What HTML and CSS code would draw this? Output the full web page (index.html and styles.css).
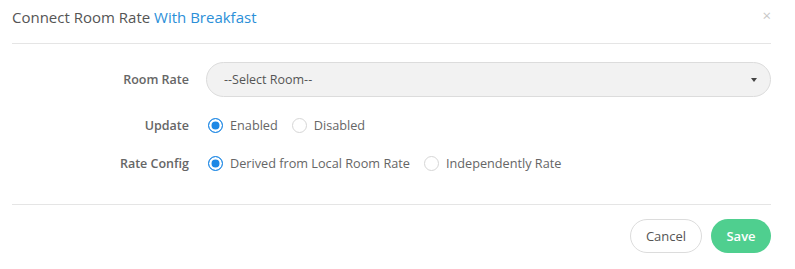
FILE: index.html
```html
<!DOCTYPE html>
<html lang="en">
<head>
    <meta charset="UTF-8">
    <title>Connect Room Rate</title>
    <link rel="stylesheet" href="styles.css">
</head>
<body>
    <div class="modal">
        <div class="modal-header">
            <h4>Connect Room Rate <span class="accent">With Breakfast</span></h4>
            <span class="close-btn">&times;</span>
        </div>

        <div class="modal-body">
            <div class="form-row">
                <label class="form-label">Room Rate</label>
                <div class="select-box">
                    <span>--Select Room--</span>
                    <span class="caret"></span>
                </div>
            </div>
            <div class="form-row">
                <label class="form-label">Update</label>
                <div class="radio-group">
                    <label class="radio"><span class="dot checked"></span>Enabled</label>
                    <label class="radio"><span class="dot"></span>Disabled</label>
                </div>
            </div>
            <div class="form-row">
                <label class="form-label">Rate Config</label>
                <div class="radio-group">
                    <label class="radio"><span class="dot checked"></span>Derived from Local Room Rate</label>
                    <label class="radio"><span class="dot"></span>Independently Rate</label>
                </div>
            </div>
        </div>

        <div class="modal-footer">
            <button class="btn btn-cancel">Cancel</button>
            <button class="btn btn-save">Save</button>
        </div>
    </div>
</body>
</html>
```

FILE: styles.css
```css
* {
    margin: 0;
    padding: 0;
    box-sizing: border-box;
}

body {
    font-family: "Open Sans", Arial, sans-serif;
    background: #fff;
    color: #666;
}

.modal {
    width: 795px;
    padding: 0 24px 0 12px;
}

/* Header */
.modal-header {
    height: 44px;
    display: flex;
    justify-content: space-between;
    align-items: flex-start;
    border-bottom: 1px solid #e5e5e5;
}

.modal-header h4 {
    font-size: 15px;
    font-weight: 400;
    color: #555;
    padding-top: 7px;
}

.accent {
    color: #2b8fd8;
}

.close-btn {
    font-size: 15px;
    color: #c8c8c8;
    padding-top: 5px;
}

/* Body */
.modal-body {
    padding: 18px 0 30px;
}

.form-row {
    display: flex;
    align-items: center;
    margin-bottom: 16px;
}

.form-row:first-child {
    margin-bottom: 17px;
}

.form-row:last-child {
    margin-bottom: 0;
}

.form-label {
    width: 177px;
    text-align: right;
    font-size: 12.5px;
    font-weight: 600;
    color: #666;
    margin-right: 17px;
}

.select-box {
    flex: 1;
    height: 35px;
    background: #f2f2f2;
    border: 1px solid #dcdcdc;
    border-radius: 18px;
    display: flex;
    justify-content: space-between;
    align-items: center;
    padding: 0 13px 0 17px;
    font-size: 12.5px;
    color: #555;
}

.caret {
    width: 0;
    height: 0;
    border-left: 3.5px solid transparent;
    border-right: 3.5px solid transparent;
    border-top: 4px solid #444;
}

.radio-group {
    display: flex;
    align-items: center;
    height: 22px;
}

.radio {
    display: flex;
    align-items: center;
    font-size: 12.7px;
    color: #666;
    margin-right: 12px;
}

.dot {
    width: 15px;
    height: 15px;
    border: 1px solid #d6d6d6;
    border-radius: 50%;
    margin: 0 7px 0 2px;
    background: #fff;
}

.dot.checked {
    border-color: #1e88e5;
    background: #1e88e5;
    box-shadow: inset 0 0 0 2.5px #fff;
}

/* Footer */
.modal-footer {
    border-top: 1px solid #e5e5e5;
    padding-top: 14px;
    display: flex;
    justify-content: flex-end;
    gap: 9px;
}

.btn {
    height: 34px;
    border-radius: 17px;
    font-family: "Open Sans", Arial, sans-serif;
    font-size: 13px;
    cursor: pointer;
}

.btn-cancel {
    width: 72px;
    background: #fff;
    border: 1px solid #dcdcdc;
    color: #555;
}

.btn-save {
    width: 60px;
    background: #4fcf8f;
    border: none;
    color: #fff;
    font-weight: 600;
}
```
